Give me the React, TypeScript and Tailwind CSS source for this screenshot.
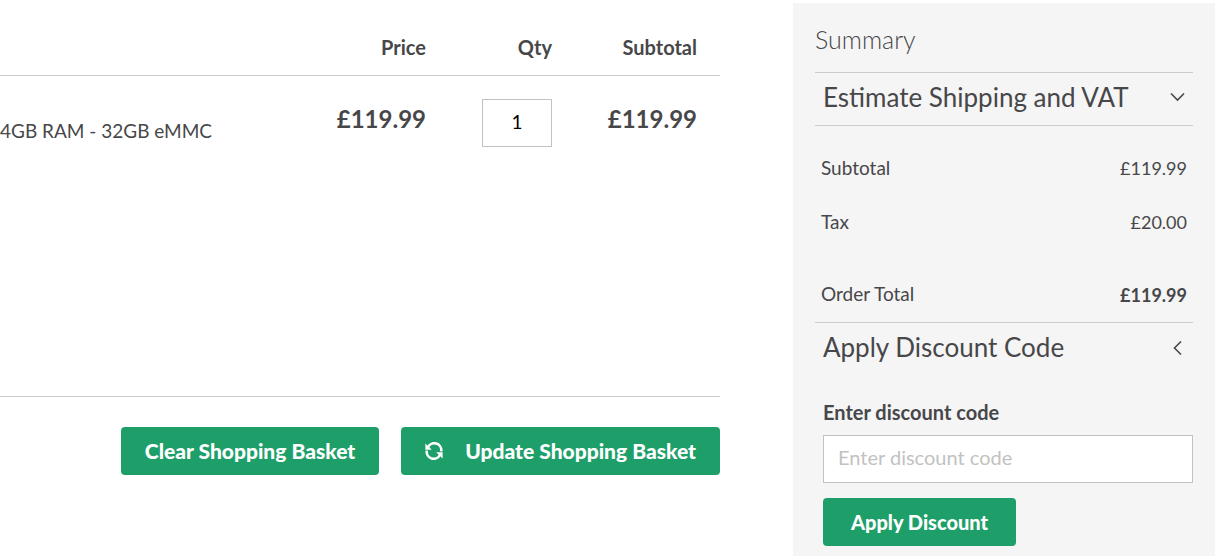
import { useState } from 'react';

const items = [
  { id: 1, name: '4GB RAM - 32GB eMMC', price: 119.99, qty: 1 },
];

const money = (value: number) => `£${value.toFixed(2)}`;

const buttonClass =
  'h-12 rounded bg-[#1e9f69] font-black text-white hover:bg-[#19885a] transition-colors whitespace-nowrap';

function RefreshIcon() {
  return (
    <svg width="18" height="18" viewBox="0 0 18 18" fill="none" stroke="currentColor" strokeWidth="2.6" aria-hidden="true">
      <path d="M3 5.2A7 7 0 0 1 16.2 9.4" />
      <path d="M15 12.8A7 7 0 0 1 1.8 8.6" />
      <path d="M0.4 1.4v6.4h6.4z" fill="currentColor" stroke="none" />
      <path d="M17.6 16.6v-6.4h-6.4z" fill="currentColor" stroke="none" />
    </svg>
  );
}

function Chevron({ open }: { open: boolean }) {
  return (
    <svg width="16" height="16" viewBox="0 0 16 16" fill="none" stroke="currentColor" strokeWidth="1.6" aria-hidden="true">
      <path d={open ? 'M12 1.5L5.5 8l6.5 6.5' : 'M2 4.5L8.5 11 15 4.5'} />
    </svg>
  );
}

function BasketTable() {
  const [qty, setQty] = useState(String(items[0].qty));

  return (
    <table className="w-full table-fixed border-separate border-spacing-0">
      <thead>
        <tr className="h-[76px] text-xl leading-6">
          <th aria-label="Item" className="border-b border-[#cccccc]" />
          <th className="w-40 border-b border-[#cccccc] pt-[18px] pr-[23px] text-right font-bold">Price</th>
          <th className="w-[126px] border-b border-[#cccccc] pt-[18px] pr-[23px] text-right font-bold">Qty</th>
          <th className="w-[145px] border-b border-[#cccccc] pt-[18px] pr-[23px] text-right font-bold">Subtotal</th>
        </tr>
      </thead>
      <tbody>
        {items.map((item) => (
          <tr key={item.id} className="h-[321px] align-top">
            <td className="border-b border-[#cccccc] pt-[43px] text-[19px] leading-6">{item.name}</td>
            <td className="border-b border-[#cccccc] pt-[27px] pr-[23px] text-right text-2xl font-bold">{money(item.price)}</td>
            <td className="border-b border-[#cccccc] pt-[23px] pr-[23px] text-right">
              <input
                type="text"
                aria-label="Qty"
                value={qty}
                onChange={(e) => setQty(e.target.value)}
                className="h-12 w-[70px] border border-[#c2c2c2] bg-white pb-1 text-center text-[19px] text-black"
              />
            </td>
            <td className="border-b border-[#cccccc] pt-[27px] pr-[23px] text-right text-2xl font-bold">{money(item.price * item.qty)}</td>
          </tr>
        ))}
      </tbody>
    </table>
  );
}

function Summary() {
  return (
    <aside className="mt-[3px] mr-1.5 bg-[#f5f5f5] px-[22px] pb-2.5">
      <h2 className="flex h-[69px] items-center pt-1 text-[25px] font-light">Summary</h2>

      <button type="button" aria-expanded="false" className="flex h-[54px] w-full items-center justify-between border-y border-[#cccccc] px-2 pb-1 text-left text-[26px]">
        Estimate Shipping and VAT
        <Chevron open={false} />
      </button>

      <table className="mt-[15px] w-full text-lg">
        <tbody>
          <tr className="h-[54px]">
            <th scope="row" className="pl-1.5 text-left text-[19px] font-normal">Subtotal</th>
            <td className="pr-1.5 text-right">£119.99</td>
          </tr>
          <tr className="h-[54px]">
            <th scope="row" className="pl-1.5 text-left text-[19px] font-normal">Tax</th>
            <td className="pr-1.5 text-right">£20.00</td>
          </tr>
          <tr className="h-[73px] align-bottom">
            <th scope="row" className="pb-[13px] pl-1.5 text-left text-[19px] font-normal">Order Total</th>
            <td className="pr-1.5 pb-[13px] text-right font-bold">£119.99</td>
          </tr>
        </tbody>
      </table>

      <button type="button" aria-expanded="true" className="flex h-[54px] w-full items-center justify-between border-t border-[#cccccc] px-2 pb-1 text-left text-[26px]">
        Apply Discount Code
        <Chevron open />
      </button>

      <form className="mt-6 pl-2" onSubmit={(e) => e.preventDefault()}>
        <label htmlFor="discount" className="block text-xl leading-6 font-bold">Enter discount code</label>
        <input
          id="discount"
          type="text"
          placeholder="Enter discount code"
          className="mt-[11px] block h-12 w-full border border-[#c2c2c2] bg-white px-3.5 pb-1 text-xl placeholder:text-[#c2c2c2]"
        />
        <button type="submit" className={`${buttonClass} mt-[15px] px-7 text-xl`}>Apply Discount</button>
      </form>
    </aside>
  );
}

export default function App() {
  return (
    <div className="grid min-h-screen grid-cols-[minmax(0,1fr)_428px] gap-[73px] bg-white font-['Lato',sans-serif] text-[#47474a]">
      <main>
        <BasketTable />
        <div className="flex justify-end gap-[22px] pt-[30px]">
          <button type="button" className={`${buttonClass} px-6 text-[21px]`}>Clear Shopping Basket</button>
          <button type="button" className={`${buttonClass} flex items-center gap-[22px] px-6 text-[21px]`}>
            <RefreshIcon />
            Update Shopping Basket
          </button>
        </div>
      </main>
      <Summary />
    </div>
  );
}
